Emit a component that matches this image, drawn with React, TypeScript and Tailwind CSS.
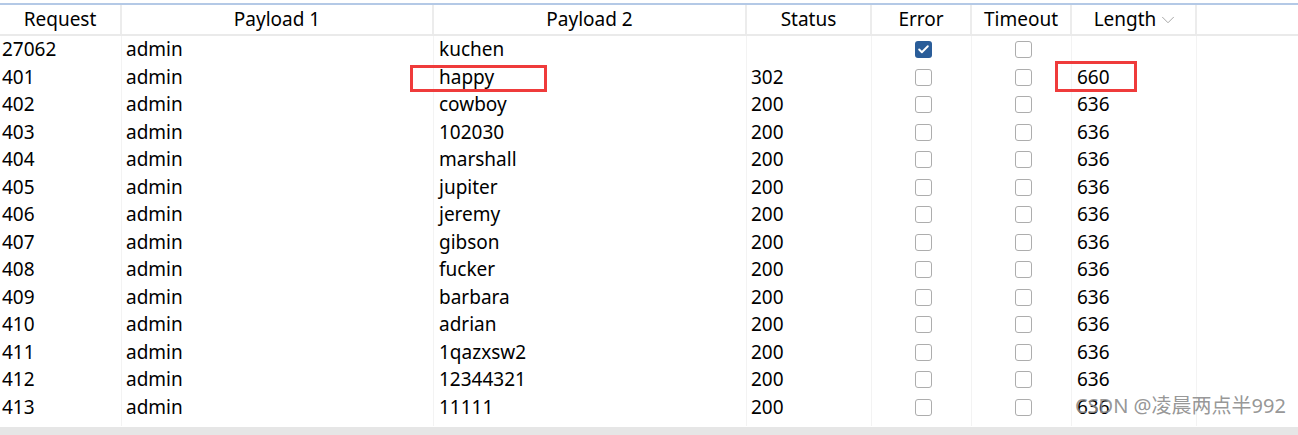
import { Check, ChevronDown } from "lucide-react";

interface Row {
  request: string;
  p1: string;
  p2: string;
  status: string;
  error: boolean;
  length: string;
}

const ROWS: Row[] = [
  { request: "27062", p1: "admin", p2: "kuchen", status: "", error: true, length: "" },
  { request: "401", p1: "admin", p2: "happy", status: "302", error: false, length: "660" },
  { request: "402", p1: "admin", p2: "cowboy", status: "200", error: false, length: "636" },
  { request: "403", p1: "admin", p2: "102030", status: "200", error: false, length: "636" },
  { request: "404", p1: "admin", p2: "marshall", status: "200", error: false, length: "636" },
  { request: "405", p1: "admin", p2: "jupiter", status: "200", error: false, length: "636" },
  { request: "406", p1: "admin", p2: "jeremy", status: "200", error: false, length: "636" },
  { request: "407", p1: "admin", p2: "gibson", status: "200", error: false, length: "636" },
  { request: "408", p1: "admin", p2: "fucker", status: "200", error: false, length: "636" },
  { request: "409", p1: "admin", p2: "barbara", status: "200", error: false, length: "636" },
  { request: "410", p1: "admin", p2: "adrian", status: "200", error: false, length: "636" },
  { request: "411", p1: "admin", p2: "1qazxsw2", status: "200", error: false, length: "636" },
  { request: "412", p1: "admin", p2: "12344321", status: "200", error: false, length: "636" },
  { request: "413", p1: "admin", p2: "11111", status: "200", error: false, length: "636" },
  // partly hidden under the scrollbar, only the checkbox tops show
  { request: "", p1: "", p2: "", status: "", error: false, length: "" },
];

function Box({ checked }: { checked?: boolean }) {
  if (checked) {
    return (
      <span className="flex h-[17px] w-[17px] items-center justify-center rounded-[3px] bg-[#2a5d99]">
        <Check size={13} strokeWidth={3.5} className="text-white" />
      </span>
    );
  }
  return <span className="block h-[17px] w-[17px] rounded-[3px] border border-[#adadad] bg-white" />;
}

const cell = "shrink-0 h-full border-r border-[#f3f3f3]";

export default function App() {
  return (
    <div
      className="relative h-[435px] w-[1298px] overflow-hidden bg-white text-[19px] text-black"
      style={{ fontFamily: '"Noto Sans", "Noto Sans CJK SC", sans-serif' }}
    >
      <div className="h-[3px] bg-white" />
      <div className="flex h-[33px] items-center border-t-2 border-b-2 border-t-[#b4c9e6] border-b-[#eaeaea] leading-none">
        <div className="flex h-full w-[122px] shrink-0 items-center justify-center border-r-2 border-[#ececec]">Request</div>
        <div className="flex h-full w-[312px] shrink-0 items-center justify-center border-r-2 border-[#ececec]">Payload 1</div>
        <div className="flex h-full w-[313px] shrink-0 items-center justify-center border-r-2 border-[#ececec]">Payload 2</div>
        <div className="flex h-full w-[125px] shrink-0 items-center justify-center border-r-2 border-[#ececec]">Status</div>
        <div className="flex h-full w-[100px] shrink-0 items-center justify-center border-r-2 border-[#ececec]">Error</div>
        <div className="flex h-full w-[100px] shrink-0 items-center justify-center border-r-2 border-[#ececec]">Timeout</div>
        <div className="flex h-full w-[125px] shrink-0 items-center justify-center gap-[1px] border-r-2 border-[#ececec] pl-[6px]">
          Length
          <ChevronDown size={22} strokeWidth={1} className="text-[#a0a0a0]" />
        </div>
      </div>

      <div className="h-[390px] overflow-hidden">
        {ROWS.map((r, i) => (
          <div key={i} className="flex h-[27.5px] items-center leading-none">
            <div className={`${cell} flex w-[122px] items-center pl-[2px]`}>{r.request}</div>
            <div className={`${cell} flex w-[312px] items-center pl-[4px]`}>{r.p1}</div>
            <div className={`${cell} relative flex w-[313px] items-center pl-[5px]`}>
              {r.p2}
              {r.p2 === "happy" && (
                <span className="absolute left-[-24px] top-[1px] h-[27px] w-[137px] border-[3px] border-[#ef3b3b]" />
              )}
            </div>
            <div className={`${cell} flex w-[125px] items-center pl-[4px]`}>{r.status}</div>
            <div className={`${cell} flex w-[100px] items-center justify-center pl-[4px]`}>
              <Box checked={r.error} />
            </div>
            <div className={`${cell} flex w-[100px] items-center justify-center pl-[4px]`}>
              <Box />
            </div>
            <div className={`${cell} relative flex w-[125px] items-center pl-[5px]`}>
              {r.length}
              {r.length === "660" && (
                <span className="absolute left-[-17px] top-[-3px] h-[31px] w-[82px] border-[3px] border-[#ef3b3b]" />
              )}
            </div>
          </div>
        ))}
      </div>

      <div className="absolute bottom-0 left-0 h-[8px] w-full bg-[#e6e6e6]" />
      <div className="absolute left-[1075px] top-[396px] text-[20px] leading-none text-[#8a8a8a]/90">
        CSDN @凌晨两点半992
      </div>
    </div>
  );
}
